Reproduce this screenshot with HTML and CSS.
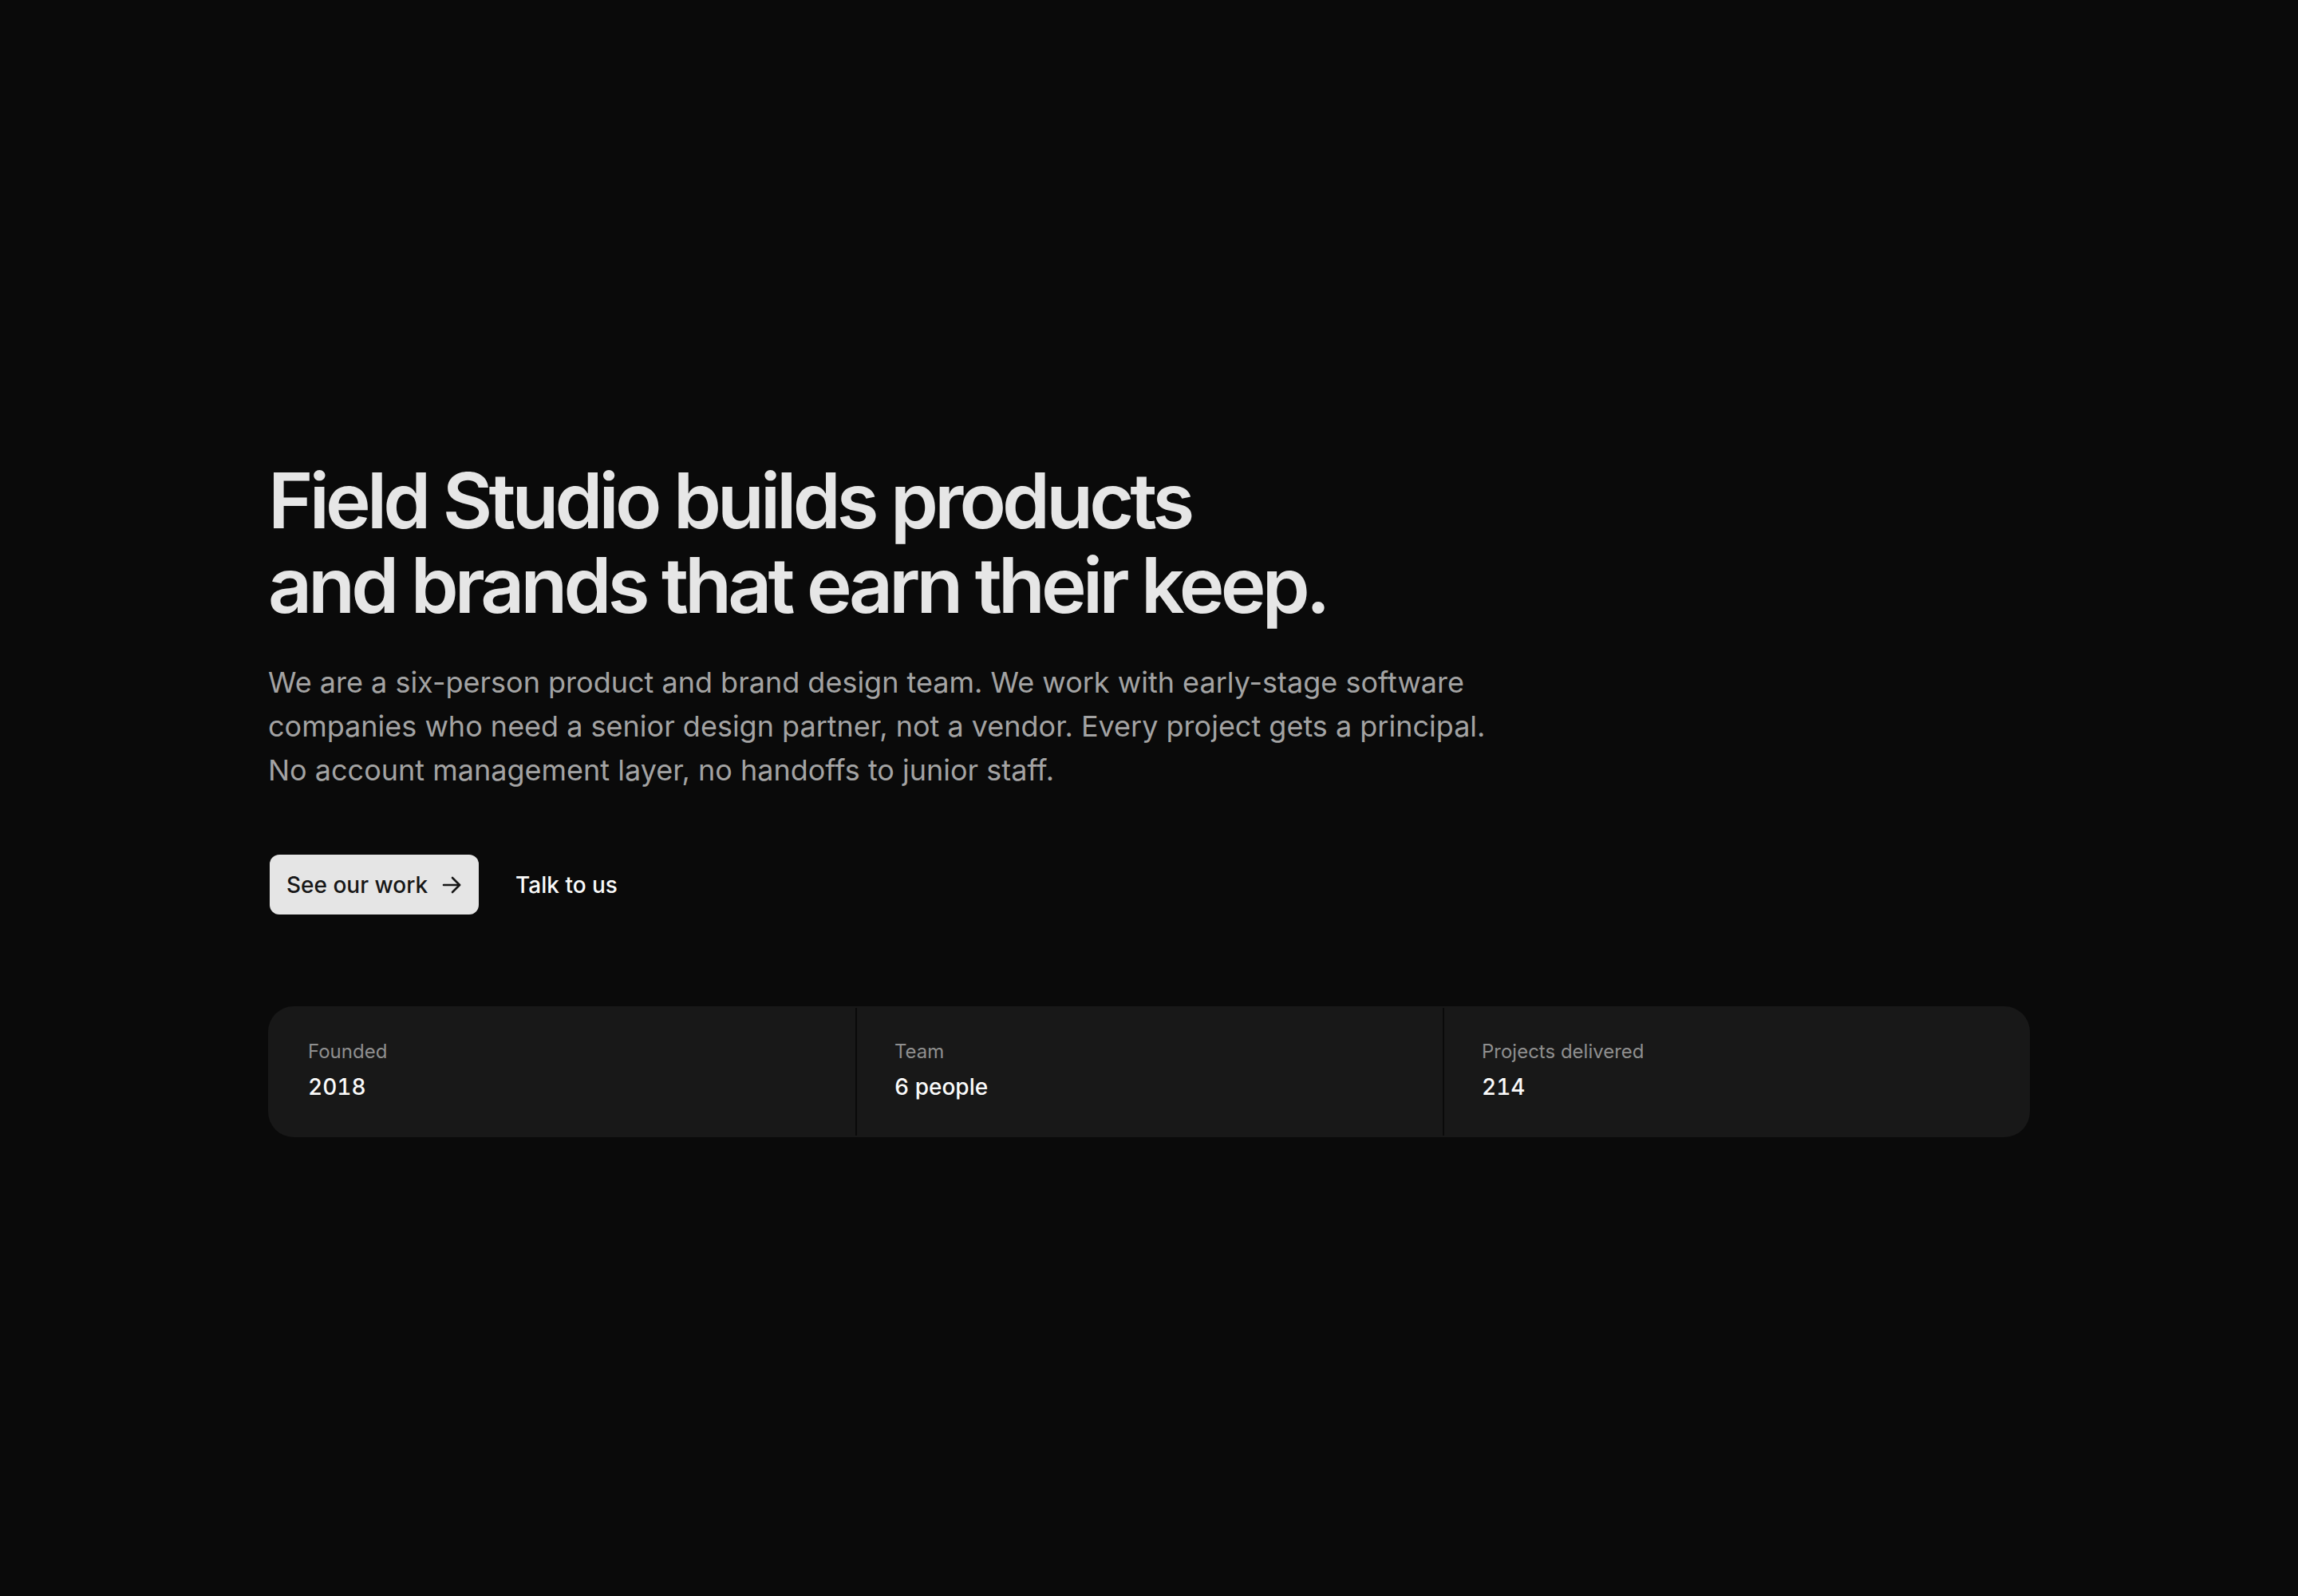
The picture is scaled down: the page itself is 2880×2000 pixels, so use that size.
FILE: index.html
```html
<!DOCTYPE html>
<html lang="en">
<head>
<meta charset="utf-8">
<title>Field Studio</title>
<link rel="stylesheet" href="styles.css">
</head>
<body>
<main class="page">
  <section class="hero">
    <h1 class="title">Field Studio builds products<br>and brands that earn their keep.</h1>
    <p class="lead">We are a six-person product and brand design team. We work with early-stage software companies who need a senior design partner, not a vendor. Every project gets a principal. No account management layer, no handoffs to junior staff.</p>
    <div class="actions">
      <a class="btn-primary" href="#work">See our work
        <svg class="arrow" width="24" height="24" viewBox="0 0 24 24" fill="none" stroke="currentColor" stroke-width="2.6" stroke-linecap="round" stroke-linejoin="round"><path d="M2 12h20"/><path d="M13 3l9 9-9 9"/></svg>
      </a>
      <a class="btn-link" href="#contact">Talk to us</a>
    </div>
    <div class="stats">
      <div class="stat">
        <div class="stat-label">Founded</div>
        <div class="stat-value">2018</div>
      </div>
      <div class="stat">
        <div class="stat-label">Team</div>
        <div class="stat-value">6 people</div>
      </div>
      <div class="stat">
        <div class="stat-label">Projects delivered</div>
        <div class="stat-value">214</div>
      </div>
    </div>
  </section>
</main>
</body>
</html>
```
FILE: styles.css
```css
* { box-sizing: border-box; }
html, body { margin: 0; padding: 0; }
body {
  background: #0a0a0a;
  font-family: "Inter", "Liberation Sans", sans-serif;
  color: #e5e5e5;
}
.page {
  min-height: 2000px;
  display: flex;
  flex-direction: column;
  justify-content: center;
  align-items: center;
}
.hero {
  width: 2208px;
}
.title {
  margin: 0;
  font-size: 96px;
  line-height: 1.1;
  font-weight: 600;
  letter-spacing: -0.05em;
  color: #e6e6e6;
}
.lead {
  margin: 42px 0 0;
  max-width: 1536px;
  font-size: 36px;
  line-height: 55px;
  color: #a3a3a3;
}
.actions {
  margin-top: 78px;
  display: flex;
  align-items: center;
  gap: 46px;
}
.btn-primary {
  display: inline-flex;
  align-items: center;
  gap: 18px;
  height: 75px;
  margin-left: 2px;
  padding: 0 22px 0 21px;
  background: #e5e5e5;
  color: #171717;
  border-radius: 12px;
  font-size: 28px;
  font-weight: 500;
  text-decoration: none;
}
.arrow { width: 24px; height: 24px; }
.btn-link {
  color: #fafafa;
  font-size: 28px;
  font-weight: 500;
  text-decoration: none;
}
.stats {
  margin-top: 115px;
  display: grid;
  grid-template-columns: repeat(3, 1fr);
  background: #181818;
  border-radius: 32px;
  padding: 2px 0;
}
.stat {
  padding: 37px 48px 39px 50px;
}
.stat + .stat {
  border-left: 2px solid #0a0a0a;
  padding-left: 47px;
}
.stat-label {
  font-size: 24px;
  line-height: 36px;
  color: #8f8f8f;
}
.stat-value {
  margin-top: 4px;
  font-size: 28px;
  line-height: 44px;
  font-weight: 500;
  font-variant-numeric: tabular-nums;
  color: #fafafa;
}
```
